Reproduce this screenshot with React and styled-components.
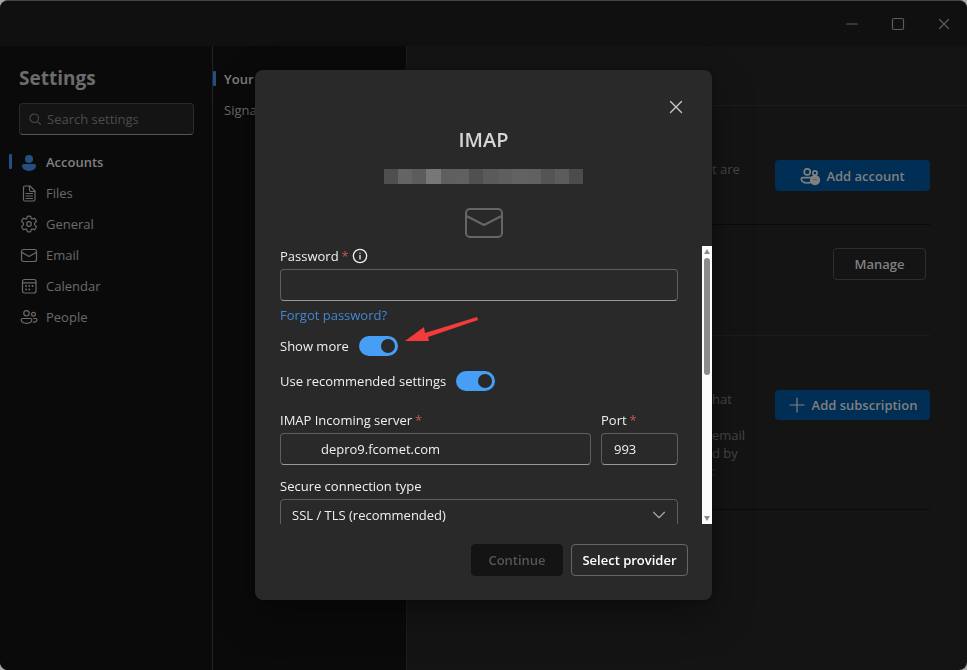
import React, { useState } from 'react'
import styled, { createGlobalStyle } from 'styled-components'

const GlobalStyle = createGlobalStyle`
    * {
        box-sizing: border-box;
    }
    body {
        margin: 0;
        background-color: #a8a8a8;
        font-family: 'Open Sans', 'Noto Sans', sans-serif;
        font-size: 13px;
        line-height: 20px;
        color: #6b6b6b;
    }
    button, input, select {
        font: inherit;
        color: inherit;
    }
    p, h1, h2 {
        margin: 0;
    }
`
const Window = styled.div`
    display: flex;
    flex-direction: column;
    min-height: 100vh;
    border-top: 1px solid #444444;
    border-radius: 8px;
    overflow: hidden;
    background-color: #141414;
`
const TitleBar = styled.header`
    display: flex;
    justify-content: flex-end;
    height: 45px;
    background-color: #101010;
`
const WindowButton = styled.button`
    display: flex;
    align-items: center;
    justify-content: center;
    width: 46px;
    padding: 0;
    border: none;
    background: none;
    color: #5c5c5c;
`
const Body = styled.div`
    display: flex;
    flex: 1;
`
const Sidebar = styled.aside`
    width: 213px;
    padding: 20px 18px 0px 19px;
    border-right: 1px solid #242424;
    background-color: #0a0a0a;
`
const SidebarTitle = styled.h1`
    font-size: 19px;
    font-weight: 700;
    line-height: 24px;
    color: #6c6c6c;
`
const SearchBox = styled.label`
    display: flex;
    align-items: center;
    gap: 5px;
    height: 32px;
    margin: 13px 0px 11px;
    padding: 0px 8px;
    border: 1px solid #2a2a2a;
    border-bottom-color: #565656;
    border-radius: 4px;
    background-color: #141414;
    color: #4c4c4c;
`
const SearchInput = styled.input`
    flex: 1;
    min-width: 0;
    padding: 0;
    border: none;
    outline: none;
    background: none;
    &::placeholder {
        color: #4c4c4c;
        opacity: 1;
    }
`
const NavList = styled.nav`
    display: flex;
    flex-direction: column;
`
const NavItem = styled.a`
    position: relative;
    display: flex;
    align-items: center;
    gap: 8px;
    height: 31px;
    padding-left: ${props => props.$sub ? '11px' : '1px'};
    color: ${props => props.$active ? '#808080' : '#6a6a6a'};
    font-weight: ${props => props.$active ? 600 : 400};
    text-decoration: none;
    &::before {
        content: '';
        display: ${props => props.$active ? 'block' : 'none'};
        position: absolute;
        left: ${props => props.$sub ? '0px' : '-10px'};
        width: 3px;
        height: 15px;
        border-radius: 1px;
        background-color: #244f80;
    }
`
const SubNav = styled.aside`
    width: 193px;
    padding-top: 17px;
    background-color: #0a0a0a;
`
const Main = styled.main`
    flex: 1;
    min-width: 0;
    border-left: 1px solid #1c1c1c;
`
const MainHeader = styled.div`
    height: 60px;
    border-bottom: 1px solid #1c1c1c;
`
const Section = styled.section`
    display: flex;
    justify-content: flex-end;
    align-items: flex-start;
    min-height: ${props => props.$height};
    margin-right: 37px;
    padding-top: ${props => props.$top};
    border-bottom: 1px solid ${props => props.$line};
`
const Copy = styled.p`
    width: 63px;
    line-height: 18px;
    color: #474747;
`
const ActionButton = styled.button`
    display: flex;
    align-items: center;
    justify-content: center;
    gap: 6px;
    width: 155px;
    height: ${props => props.$height};
    padding: 0;
    border: none;
    border-radius: 4px;
    background-color: #002e54;
    color: #808080;
    font-weight: 600;
`
const ManageButton = styled.button`
    width: 93px;
    height: 32px;
    margin-right: 4px;
    border: 1px solid #2e2e2e;
    border-radius: 4px;
    background: none;
    color: #808080;
    font-weight: 600;
`
const InlineLink = styled.a`
    color: #1b3a5c;
    text-decoration: none;
`
const Overlay = styled.div`
    position: fixed;
    inset: 0;
    display: flex;
    align-items: center;
    justify-content: center;
`
const Dialog = styled.form`
    display: flex;
    flex-direction: column;
    width: 457px;
    max-width: 100%;
    height: calc(100vh - 140px);
    border-radius: 8px;
    background-color: #292929;
    box-shadow: 0 0 8px rgba(0, 0, 0, 0.3), 0 16px 40px rgba(0, 0, 0, 0.35);
    color: #f0f0f0;
`
const DialogHeader = styled.div`
    display: flex;
    flex-direction: column;
    align-items: center;
    padding-top: 25px;
`
const CloseButton = styled.button`
    display: flex;
    align-self: flex-end;
    align-items: center;
    justify-content: center;
    width: 24px;
    height: 24px;
    margin-right: 24px;
    padding: 0;
    border: none;
    background: none;
    color: #c8c8c8;
`
const DialogTitle = styled.h2`
    margin: 7px 0px 15px;
    font-size: 20px;
    font-weight: 600;
    line-height: 28px;
    color: #d6d6d6;
`
const Redacted = styled.div`
    display: flex;
    width: 200px;
    height: 15px;
    margin-bottom: 24px;
`
const Block = styled.span`
    flex: 1;
    background-color: ${props => props.$color};
`
const ScrollArea = styled.div`
    display: flex;
    flex: 1;
    min-height: 0;
    margin-top: 8px;
`
const Fields = styled.div`
    flex: 1;
    min-width: 0;
    padding: 0px 24px 0px 25px;
    overflow: hidden;
`
const ScrollBar = styled.div`
    display: flex;
    flex-direction: column;
    align-items: center;
    justify-content: space-between;
    width: 10px;
    padding: 3px 0px;
    background-color: #fcfcfc;
    color: #8b8b8b;
`
const ScrollThumb = styled.div`
    width: 6px;
    height: 117px;
    margin: 4px 0px auto;
    border-radius: 3px;
    background-color: #8b8b8b;
`
const Label = styled.label`
    display: flex;
    align-items: center;
    gap: 3px;
    height: 20px;
    margin-bottom: 3px;
`
const Required = styled.span`
    color: #c4565b;
`
const Input = styled.input`
    display: block;
    width: 100%;
    height: 32px;
    padding: 0px 12px;
    padding-left: ${props => props.$indent || '12px'};
    border: 1px solid #5e5e5e;
    border-bottom-color: #9a9a9a;
    border-radius: 4px;
    outline: none;
    background-color: #292929;
`
const ForgotLink = styled.a`
    display: inline-block;
    margin: 4px 0px 11px;
    vertical-align: top;
    color: #4287d0;
    text-decoration: none;
`
const SwitchRow = styled.div`
    position: relative;
    display: flex;
    align-items: center;
    gap: 10px;
    height: 20px;
    margin-bottom: ${props => props.$space};
`
const Switch = styled.input`
    appearance: none;
    width: 39px;
    height: 20px;
    margin: 0;
    padding: 3px;
    border-radius: 10px;
    background-color: #6b6b6b;
    &::before {
        content: '';
        display: block;
        width: 14px;
        height: 14px;
        border-radius: 50%;
        background-color: #292929;
    }
    &:checked {
        background-color: #479ef5;
    }
    &:checked::before {
        margin-left: auto;
    }
`
const Arrow = styled.svg`
    position: absolute;
    left: 125px;
    top: -20px;
`
const ServerRow = styled.div`
    display: flex;
    gap: 10px;
    margin-bottom: 11px;
`
const ServerField = styled.div`
    flex: ${props => props.$width ? '0 0 ' + props.$width : '1'};
    min-width: 0;
`
const SelectWrap = styled.div`
    position: relative;
    svg {
        position: absolute;
        right: 12px;
        top: 9px;
        color: #a8a8a8;
        pointer-events: none;
    }
`
const Select = styled.select`
    appearance: none;
    display: block;
    width: 100%;
    height: 32px;
    padding: 0px 11px;
    border: 1px solid #5e5e5e;
    border-radius: 4px;
    background-color: #292929;
`
const DialogFooter = styled.div`
    display: flex;
    justify-content: flex-end;
    gap: 8px;
    padding: 20px 24px 24px;
`
const FooterButton = styled.button`
    width: ${props => props.$width};
    height: 32px;
    padding: 0;
    border: 1px solid #666666;
    border-radius: 4px;
    background: none;
    color: #ffffff;
    font-weight: 600;
    white-space: nowrap;
    &:disabled {
        border-color: #141414;
        background-color: #141414;
        color: #565656;
    }
`

const Icon = ({ size = 18, width = 1.2, children, ...rest }) => (
    <svg width={size} height={size} viewBox="0 0 18 18" fill="none" stroke="currentColor" strokeWidth={width} strokeLinecap="round" strokeLinejoin="round" aria-hidden="true" {...rest}>
        {children}
    </svg>
)

const PersonIcon = () => (
    <Icon stroke="none" fill="#245080">
        <circle cx="9" cy="6" r="4" />
        <path d="M3.8 11h10.4c1 0 1.8.8 1.8 1.8C16 15.8 13 18 9 18s-7-2.2-7-5.2c0-1 .8-1.8 1.8-1.8z" />
    </Icon>
)
const FileIcon = () => (
    <Icon>
        <path d="M5 2h5l5 5v8.5a1.5 1.5 0 0 1-1.5 1.5h-8.500A1.500 1.500 0 0 1 3.500 15.500v-12A1.500 1.500 0 0 1 5 2z" />
        <path d="M9.500 2v4a1.500 1.500 0 0 0 1.500 1.500h4M6 9.500h6.500M6 12h6.500M6 14.500h6.500" />
    </Icon>
)
const GearIcon = () => (
    <Icon>
        <path d="M7.300 1.400Q9 1 10.700 1.400L11.100 3.300Q11.400 4.200 12.500 3.900L14.500 3.200Q15.800 4.600 16.400 6.400L14.900 7.800Q14.100 9 14.900 10.200L16.400 11.600Q15.800 13.400 14.500 14.800L12.500 14.100Q11.400 13.800 11.100 14.700L10.700 16.600Q9 17 7.300 16.600L6.900 14.700Q6.600 13.800 5.500 14.100L3.500 14.800Q2.200 13.400 1.600 11.600L3.100 10.200Q3.900 9 3.100 7.800L1.600 6.400Q2.200 4.600 3.500 3.200L5.500 3.900Q6.600 4.200 6.900 3.300z" />
        <circle cx="9" cy="9" r="2.300" />
    </Icon>
)
const MailIcon = () => (
    <Icon>
        <rect x="1.5" y="3.5" width="15" height="12" rx="2" />
        <path d="M2 6.500l7 4 7-4" />
    </Icon>
)
const CalendarIcon = () => (
    <Icon>
        <rect x="2.5" y="2.5" width="13.5" height="13.5" rx="2" />
        <path d="M2.500 5.800h13.500" />
        <path d="M6 9h.1M9.200 9h.1M12.500 9h.1M6 12.500h.1M9.200 12.500h.1" strokeWidth="1.8" />
    </Icon>
)
const PeopleIcon = ({ badge, ...rest }) => (
    <Icon {...rest}>
        <circle cx="6.5" cy="5.3" r="2.7" />
        <circle cx="13.5" cy="6.3" r="1.9" />
        <path d="M2.500 10.500h8c.8 0 1.300.5 1.300 1.300 0 2-2 3.500-5.300 3.500s-5.300-1.500-5.300-3.500c0-.8.5-1.300 1.300-1.300z" />
        <path d="M13.500 10.500h2.300c.7 0 1.200.5 1.200 1.200 0 1.600-1.500 2.500-3.700 2.500" />
        {badge && <circle cx="13.500" cy="12.700" r="4.600" fill="currentColor" stroke="none" />}
        {badge && <path d="M12 12.200h3" stroke="#4f5a66" strokeWidth=".8" />}
    </Icon>
)

const navItems = [
    { name: 'Accounts', icon: PersonIcon },
    { name: 'Files', icon: FileIcon },
    { name: 'General', icon: GearIcon },
    { name: 'Email', icon: MailIcon },
    { name: 'Calendar', icon: CalendarIcon },
    { name: 'People', icon: PeopleIcon },
]

const blocks = ['#4f4f4f', '#646464', '#5c5c5c', '#777777', '#5f5f5f', '#606060', '#505050', '#5a5a5a', '#5e5e5e', '#626262', '#616161', '#545454', '#5c5c5c', '#4c4c4c']

const ImapDialog = () => {
    const [showMore, setShowMore] = useState(true)
    const [recommended, setRecommended] = useState(true)

    return (
        <Dialog role="dialog" aria-labelledby="dialog-title" onSubmit={e => e.preventDefault()}>
            <DialogHeader>
                <CloseButton type="button" aria-label="Close">
                    <Icon width={1.400}><path d="M3.500 3.500l11 11M14.500 3.500l-11 11" /></Icon>
                </CloseButton>
                <DialogTitle id="dialog-title">IMAP</DialogTitle>
                <Redacted>
                    {blocks.map((color, i) => <Block key={i} $color={color} />)}
                </Redacted>
                <svg width="38" height="30" viewBox="0 0 38 30" fill="none" stroke="#666666" strokeWidth="2" aria-hidden="true">
                    <rect x="1" y="1" width="36" height="28" rx="4" />
                    <path d="M1.500 8L19 17l17.500-9" strokeLinejoin="round" />
                </svg>
            </DialogHeader>
            <ScrollArea>
                <Fields>
                    <Label htmlFor="password">
                        Password <Required>*</Required>
                        <Icon size={16} width={1.5}>
                            <circle cx="9" cy="9" r="7.5" />
                            <path d="M9 8.300v4M9 5.700v.1" />
                        </Icon>
                    </Label>
                    <Input id="password" type="password" />
                    <ForgotLink href="#forgot">Forgot password?</ForgotLink>
                    <SwitchRow $space="15px">
                        <label htmlFor="show-more">Show more</label>
                        <Switch id="show-more" type="checkbox" role="switch" checked={showMore} onChange={e => setShowMore(e.target.checked)} />
                        <Arrow width="74" height="28" viewBox="0 0 74 28" aria-hidden="true">
                            <path d="M72 1L73 4 23 21 24 25 0 25 19 11 20 17z" fill="#f33b3b" />
                        </Arrow>
                    </SwitchRow>
                    <SwitchRow $space="19px">
                        <label htmlFor="recommended">Use recommended settings</label>
                        <Switch id="recommended" type="checkbox" role="switch" checked={recommended} onChange={e => setRecommended(e.target.checked)} />
                    </SwitchRow>
                    <ServerRow>
                        <ServerField>
                            <Label htmlFor="server">IMAP Incoming server <Required>*</Required></Label>
                            <Input id="server" type="text" defaultValue="depro9.fcomet.com" $indent="40px" />
                        </ServerField>
                        <ServerField $width="77px">
                            <Label htmlFor="port">Port <Required>*</Required></Label>
                            <Input id="port" type="text" defaultValue="993" />
                        </ServerField>
                    </ServerRow>
                    <Label htmlFor="security">Secure connection type</Label>
                    <SelectWrap>
                        <Select id="security">
                            <option>SSL / TLS (recommended)</option>
                        </Select>
                        <Icon size={14} width={1.5}><path d="M2 5.500l7 7 7-7" /></Icon>
                    </SelectWrap>
                </Fields>
                <ScrollBar aria-hidden="true">
                    <svg width="6" height="5" viewBox="0 0 6 5"><path d="M3 0l3 5H0z" fill="currentColor" /></svg>
                    <ScrollThumb />
                    <svg width="6" height="5" viewBox="0 0 6 5"><path d="M3 5l3-5H0z" fill="currentColor" /></svg>
                </ScrollBar>
            </ScrollArea>
            <DialogFooter>
                <FooterButton type="submit" $width="92px" disabled>Continue</FooterButton>
                <FooterButton type="button" $width="117px">Select provider</FooterButton>
            </DialogFooter>
        </Dialog>
    )
}

const App = () => {
    return (
        <>
            <GlobalStyle />
            <Window>
                <TitleBar>
                    <WindowButton aria-label="Minimize">
                        <Icon><path d="M3.500 9h11" /></Icon>
                    </WindowButton>
                    <WindowButton aria-label="Maximize">
                        <Icon><rect x="3.5" y="3.5" width="11" height="11" rx="1.5" /></Icon>
                    </WindowButton>
                    <WindowButton aria-label="Close window">
                        <Icon><path d="M4.500 4.500l9 9M13.500 4.500l-9 9" /></Icon>
                    </WindowButton>
                </TitleBar>
                <Body>
                    <Sidebar>
                        <SidebarTitle>Settings</SidebarTitle>
                        <SearchBox>
                            <Icon size={14} width={1.400}>
                                <circle cx="8" cy="8" r="5.5" />
                                <path d="M12 12l4 4" />
                            </Icon>
                            <SearchInput type="text" placeholder="Search settings" aria-label="Search settings" />
                        </SearchBox>
                        <NavList>
                            {navItems.map(({ name, icon: ItemIcon }, i) => (
                                <NavItem key={name} href={'#' + name} $active={i === 0}>
                                    <ItemIcon />
                                    {name}
                                </NavItem>
                            ))}
                        </NavList>
                    </Sidebar>
                    <SubNav>
                        <NavItem href="#your-accounts" $sub $active>Your accounts</NavItem>
                        <NavItem href="#signatures" $sub>Signatures</NavItem>
                    </SubNav>
                    <Main>
                        <MainHeader />
                        <Section $height="119px" $top="54px" $line="#0a0a0a">
                            <Copy>t are</Copy>
                            <ActionButton $height="31px">
                                <PeopleIcon size={20} width={1.5} badge />
                                Add account
                            </ActionButton>
                        </Section>
                        <Section $height="111px" $top="23px" $line="#1c1c1c">
                            <ManageButton>Manage</ManageButton>
                        </Section>
                        <Section $height="174px" $top="54px" $line="#0a0a0a">
                            <Copy>
                                hat<br /><br />
                                email<br />
                                d by<br />
                                <InlineLink href="#more">:</InlineLink>
                            </Copy>
                            <ActionButton $height="30px">
                                <Icon><path d="M9 2v14M2 9h14" /></Icon>
                                Add subscription
                            </ActionButton>
                        </Section>
                    </Main>
                </Body>
            </Window>
            <Overlay>
                <ImapDialog />
            </Overlay>
        </>
    )
}

export default App
